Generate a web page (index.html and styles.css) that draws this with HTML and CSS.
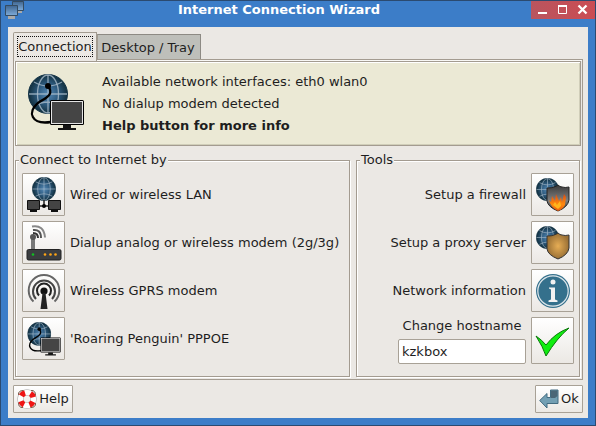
FILE: index.html
```html
<!DOCTYPE html>
<html lang="en">
<head>
<meta charset="utf-8">
<title>Internet Connection Wizard</title>
<link rel="stylesheet" href="styles.css">
</head>
<body>
<svg class="defs" width="0" height="0">
  <defs>
    <radialGradient id="blue"><stop offset="0" stop-color="#5689b5"/><stop offset=".5" stop-color="#2f5d82"/><stop offset="1" stop-color="#12303f"/></radialGradient>
    <linearGradient id="shade" x1="0" y1="0" x2="0" y2="1"><stop offset="0" stop-color="#3a3a3a"/><stop offset=".6" stop-color="#808080"/><stop offset="1" stop-color="#333"/></linearGradient>
    <linearGradient id="fire" x1="0" y1="0" x2="0" y2="1"><stop offset="0" stop-color="#d84a10"/><stop offset=".6" stop-color="#ff8a10"/><stop offset="1" stop-color="#e85a10"/></linearGradient>
    <radialGradient id="gold"><stop offset="0" stop-color="#e6ad55"/><stop offset="1" stop-color="#9a7035"/></radialGradient>
    <linearGradient id="screen" x1="0" y1="0" x2="0" y2="1"><stop offset="0" stop-color="#3f6590"/><stop offset="1" stop-color="#7eabd9"/></linearGradient>
    <symbol id="globe" viewBox="0 0 40 40">
      <circle cx="20" cy="20" r="19.5" fill="url(#blue)" stroke="#153548"/>
      <g fill="none" stroke="#a9bccb" stroke-opacity=".8" stroke-width="1.3"><path d="M20 1v38M1 20h38M6 8q14 8 28 0M6 32q14-8 28 0"/><ellipse cx="20" cy="20" rx="10.5" ry="19"/></g>
    </symbol>
    <symbol id="dialup" viewBox="0 0 56 57">
      <use href="#globe" x="0" y="0" width="40" height="40"/>
      <path d="M20 12C27 21 17 24 10 29C-1 38 3 51 23 48" fill="none" stroke="#000" stroke-width="2.3"/>
      <circle cx="20" cy="12" r="3"/>
      <rect x="22" y="26" width="34" height="25" rx="1.5" fill="#000"/>
      <rect x="23.500" y="27.500" width="31" height="22" fill="#454545" stroke="#e4e4e4"/>
      <path d="M35 51h8v3h5v2H30v-2h5z" fill="#151515"/>
    </symbol>
    <symbol id="shield" viewBox="0 0 24 28"><path d="M1 4Q6 4 8 3Q11 2 12 1Q14 3 16 3Q19 4 23 3V16Q22 23 12 27Q2 23 1 17Z"/></symbol>
  </defs>
</svg>
<div class="window">
  <header class="titlebar">
    <svg class="app-icon" width="20" height="18" viewBox="0 0 20 18"><path d="M7.500 .500h11v9h-11z" fill="url(#screen)" stroke="#354b60"/><path d="M13 10h4v2h-4z" fill="#aaa"/><path d="M.500 4.500h12v10H.500z" fill="url(#screen)" stroke="#354b60"/><path d="M3 15h7v3H3z" fill="#aaa"/></svg>
    <h1>Internet Connection Wizard</h1>
    <svg class="controls" width="64" height="18" viewBox="0 0 64 18"><path d="M7 12h9" stroke="#fff" stroke-width="2"/><path d="M27.500 5h8v7.500h-8z" fill="none" stroke="#fff"/><path d="M27 5h9" stroke="#fff" stroke-width="2"/><path d="M47.500 4.500l8 8M55.500 4.500l-8 8" stroke="#fff" stroke-width="2.300"/></svg>
  </header>
  <main class="body">
    <nav class="tabs">
      <span class="tab active"><span class="focus">Connection</span></span>
      <span class="tab">Desktop / Tray</span>
    </nav>
    <div class="page">
      <section class="banner">
        <svg width="56" height="57"><use href="#dialup" width="56" height="57"/></svg>
        <div class="info"><p>Available network interfaces: eth0 wlan0</p><p>No dialup modem detected</p><p class="bold">Help button for more info</p></div>
      </section>
      <div class="columns">
        <section class="frame connect">
          <h2>Connect to Internet by</h2>
          <div class="row"><button><svg width="36" height="36" viewBox="0 0 36 36"><use href="#globe" x="6" y="0" width="24" height="24"/><path d="M18 23v6M12 29h12" stroke="#222" stroke-width="1.500"/><circle cx="18" cy="29" r="2"/><g fill="#444" stroke="#111"><path d="M1.500 23.500h12v9h-12zM22.500 23.500h12v9h-12z"/></g><path d="M4 34h7M25 34h7" stroke="#111" stroke-width="2"/></svg></button><span>Wired or wireless LAN</span></div>
          <div class="row"><button><svg width="36" height="36" viewBox="0 0 36 36"><path d="M7 10v14" stroke="#777" stroke-width="4"/><circle cx="7" cy="12" r="3" fill="#555"/><g fill="none" stroke-width="2"><path d="M7 8q5 0 5 5" stroke="#333"/><path d="M7 5q8-1 8 8" stroke="#555"/><path d="M6 1.500q12-2 13 11" stroke="#888"/></g><rect x="1" y="24.500" width="34" height="10.500" rx="1.500" fill="#3b3d40" stroke="#222"/><circle cx="7" cy="29.500" r="1.300" fill="#10c020"/><g fill="#ffa615"><circle cx="19" cy="29.500" r="1.300"/><circle cx="24.500" cy="29.500" r="1.300"/><circle cx="29.500" cy="29.500" r="1.300"/></g></svg></button><span>Dialup analog or wireless modem (2g/3g)</span></div>
          <div class="row"><button><svg width="36" height="36" viewBox="0 0 36 36"><g fill="none" stroke-width="2"><path d="M13 22.500A7 7 0 1 1 23 22.500" stroke="#222"/><path d="M10 26A11 11 0 1 1 26 26" stroke="#444"/><path d="M7.500 28.500A15.300 15.300 0 1 1 28.500 28.500" stroke="#666"/></g><circle cx="18" cy="18" r="3.600" fill="#111"/><path d="M16.500 20h3l2 16h-7z" fill="#222"/></svg></button><span>Wireless GPRS modem</span></div>
          <div class="row"><button><svg width="34" height="34"><use href="#dialup" width="34" height="34"/></svg></button><span>'Roaring Penguin' PPPOE</span></div>
        </section>
        <section class="frame tools">
          <h2>Tools</h2>
          <div class="row"><span>Setup a firewall</span><button><svg width="36" height="36" viewBox="0 0 36 36"><use href="#globe" x="1" y="1" width="23" height="23"/><use href="#shield" x="11" y="7" width="24" height="28" fill="url(#shade)" stroke="#222"/><path d="M14 23l2 2 1-6 3 5 1-7 3 7 2-4 1 5 2-8 2 3-1 8q-2 4-7 6-7-3-9-11z" fill="url(#fire)"/><path d="M18 28l2-3 2 3 3-4 1 5-3 3z" fill="#ffb51c"/></svg></button></div>
          <div class="row"><span>Setup a proxy server</span><button><svg width="36" height="36" viewBox="0 0 36 36"><use href="#globe" x="1" y="1" width="23" height="23"/><use href="#shield" x="11" y="7" width="24" height="28" fill="url(#gold)" stroke="#333"/></svg></button></div>
          <div class="row"><span>Network information</span><button><svg width="36" height="36" viewBox="0 0 36 36"><circle cx="18" cy="18" r="17" fill="#34708c"/><circle cx="18" cy="18" r="15.200" fill="none" stroke="#dde6ea" stroke-width="1.200"/><circle cx="18" cy="9" r="2.500" fill="#f2f2f2"/><path d="M14 14.500h6v12l2.500 1v1.500h-9v-1.500l2.500-1v-10l-2-1z" fill="#f2f2f2"/></svg></button></div>
          <div class="row host"><div class="field"><label for="host">Change hostname</label><input id="host" value="kzkbox"></div><button><svg width="36" height="36" viewBox="0 0 36 36"><path d="M1 13q6 4 10 9 9-12 23-17Q22 15 11 33Q8 24 1 13z" fill="#10ed10" stroke="#087808"/></svg></button></div>
        </section>
      </div>
    </div>
    <footer>
      <button class="help"><svg width="20" height="20" viewBox="0 0 20 20"><circle cx="10" cy="10" r="6.500" fill="none" stroke="#aaa" stroke-width="6.600"/><circle cx="10" cy="10" r="6.500" fill="none" stroke="#fff" stroke-width="5.500"/><circle cx="10" cy="10" r="6.500" fill="none" stroke="#ef1515" stroke-width="5.500" stroke-dasharray="4.500 5.710" stroke-dashoffset="-2.855"/><g fill="none" stroke="#806050" stroke-width="1"><path d="M1.500 6V4q1-2 3-2.500h2M14 1.500h2q2 1 2.500 3v2M18.500 14v2q-1 2-3 2.500h-2M6 18.500H4q-2-1-2.500-3v-2"/></g></svg><span>Help</span></button>
      <button class="ok"><svg width="20" height="20" viewBox="0 0 20 20"><path d="M11.500 1h7.500v13.500H8v4.500L.700 11.500 8 4.500v4h3.500z" fill="#739fb3" stroke="#426b80"/><path d="M12 1.500h6.500V7L16 9h-4z" fill="#4b6677"/></svg><span>Ok</span></button>
    </footer>
  </main>
</div>
</body>
</html>
```
FILE: styles.css
```css
* { box-sizing: border-box; }
body { margin: 0; font: 13px/16px "DejaVu Sans", sans-serif; color: #1e1e1e; }
h1, h2, p { margin: 0; font-size: inherit; font-weight: normal; }
svg { display: block; flex: none; }
.defs { position: absolute; }
.window { width: 596px; height: 426px; background: #3c7dc8; border: 1px solid #2b4a70; padding: 0 7px 7px; }
.titlebar { height: 26px; display: grid; grid-template-columns: 27px 1fr 64px; margin: 0 -7px; }
.app-icon { margin-left: 4px; }
.titlebar h1 { color: #fff; font-weight: bold; line-height: 17px; text-align: center; margin-right: 1px; white-space: nowrap; }
.controls { background: linear-gradient(90deg, #b9555e, #cb4c53); }
.body { height: 391px; background: #ebe8e4; padding: 5px; display: flex; flex-direction: column; }
.tabs { height: 27px; display: flex; align-items: flex-end; }
.tab { width: 104px; height: 25px; border: 1px solid #a39c91; border-top-color: #8d8a84; border-right-color: #8d8a84; border-bottom: 0; background: #bebfba; text-align: center; line-height: 25px; padding-right: 2px; white-space: nowrap; }
.tab.active { width: 84px; height: 29px; margin-bottom: -2px; background: #ebe8e4; border-color: #a39c91; padding: 3px; z-index: 1; border-radius: 2px 0 0; }
.focus { display: block; height: 21px; line-height: 20px; border: 1px dotted #111; }
.page { height: 321px; border: 1px solid #a39b90; padding: 1px; box-shadow: inset 1px 1px #f8f7f4; }
.banner { width: 566px; height: 85px; border: 1px solid #a39b90; box-shadow: inset 1px 1px #fff, inset -1px -1px #d0ceb9; background: #ebe9d5; display: flex; padding: 12px; gap: 18px; }
.info { line-height: 22px; margin-top: -3px; }
.bold { font-weight: bold; }
.columns { display: flex; gap: 6px; margin-top: 14px; }
.frame { position: relative; height: 217px; border: 1px solid #a39b90; box-shadow: inset 1px 1px #fff, 1px 1px #fff; padding: 12px 6px 0; display: flex; flex-direction: column; gap: 5px; }
.connect { width: 335px; }
.tools { width: 224px; padding-right: 5px; }
.frame h2 { position: absolute; top: -9px; left: 3px; padding: 0 1px; background: #ebe8e4; }
button { width: 43px; height: 43px; padding: 0; border: 1px solid #a8a196; border-radius: 1px; background: linear-gradient(#fff, #ebe8e4); display: flex; align-items: center; justify-content: center; flex: none; font: inherit; color: inherit; }
.row { display: flex; align-items: center; gap: 5px; white-space: nowrap; }
.row button svg { margin: 1px 0 0 1px; }
.tools .row { justify-content: flex-end; }
.host { align-items: flex-start; }
.host button { height: 47px; }
.field { width: 128px; text-align: center; }
label { display: block; height: 22px; line-height: 17px; }
input { display: block; width: 128px; height: 25px; border: 1px solid #a8a196; border-radius: 2px; padding: 0 3px; margin: 0; font: inherit; color: inherit; background: #fff; }
footer { display: flex; justify-content: space-between; margin-top: 5px; }
footer button { height: 28px; gap: 2px; }
.help { width: 60px; }
.ok { width: 48px; }
```
